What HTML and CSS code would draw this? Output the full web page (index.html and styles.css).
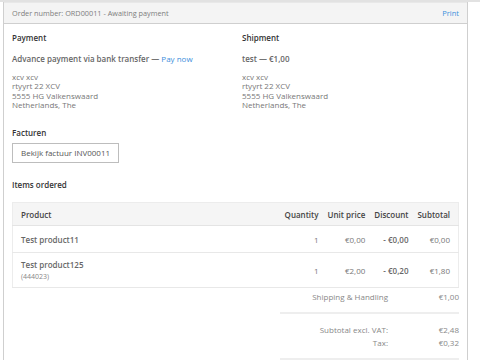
FILE: index.html
```html
<!DOCTYPE html>
<html>
<head>
<meta charset="utf-8">
<link rel="stylesheet" href="styles.css">
</head>
<body>
<div class="topstrip"></div>
<div class="panel">
  <div class="panel-head">
    <span class="order-title">Order number: ORD00011 - Awaiting payment</span>
    <a class="link print">Print</a>
  </div>
  <div class="panel-body">
    <div class="cols">
      <div class="col">
        <h3 class="heading">Payment</h3>
        <p class="method">Advance payment via bank transfer — <a class="link pay">Pay now</a></p>
        <p class="address">xcv xcv<br>rtyyrt 22 XCV<br>5555 HG Valkenswaard<br>Netherlands, The</p>
      </div>
      <div class="col">
        <h3 class="heading">Shipment</h3>
        <p class="method">test — €1,00</p>
        <p class="address">xcv xcv<br>rtyyrt 22 XCV<br>5555 HG Valkenswaard<br>Netherlands, The</p>
      </div>
    </div>
    <h3 class="heading invoices">Facturen</h3>
    <a class="btn">Bekijk factuur INV00011</a>
    <h3 class="heading items">Items ordered</h3>
    <table class="items-table">
      <thead>
        <tr>
          <th class="prod">Product</th>
          <th>Quantity</th>
          <th>Unit price</th>
          <th>Discount</th>
          <th>Subtotal</th>
        </tr>
      </thead>
      <tbody>
        <tr class="row1">
          <td class="prod"><span class="pname">Test product11</span></td>
          <td>1</td>
          <td>€0,00</td>
          <td class="disc">- €0,00</td>
          <td>€0,00</td>
        </tr>
        <tr class="row2">
          <td class="prod"><span class="pname">Test product125</span><br><span class="sku">(444023)</span></td>
          <td>1</td>
          <td>€2,00</td>
          <td class="disc">- €0,20</td>
          <td>€1,80</td>
        </tr>
      </tbody>
    </table>
    <div class="totals">
      <div class="trow ship"><span class="tl">Shipping &amp; Handling</span><span class="tv">€1,00</span></div>
      <div class="tgroup">
        <div class="trow"><span class="tl">Subtotal excl. VAT:</span><span class="tv">€2,48</span></div>
        <div class="trow"><span class="tl">Tax:</span><span class="tv">€0,32</span></div>
      </div>
    </div>
  </div>
</div>
</body>
</html>
```
FILE: styles.css
```css
html, body {
  margin: 0;
  padding: 0;
  background: #fff;
}
body {
  font-family: "Open Sans", "Liberation Sans", sans-serif;
  color: #666;
  font-size: 8px;
  overflow: hidden;
  height: 360px;
}
.topstrip {
  height: 2px;
  background: #e2e2e2;
}
.panel {
  margin-left: 3px;
  width: 463px;
  border-left: 1px solid #cfcfcf;
  border-right: 1px solid #cfcfcf;
  min-height: 358px;
}
.panel-head {
  height: 20px;
  background: #f4f4f4;
  border-top: 1px solid #e8e8e8;
  border-bottom: 1px solid #cfcfcf;
  display: flex;
  align-items: center;
  justify-content: space-between;
  padding: 0 8px 0 8px;
}
.order-title {
  font-size: 7.3px;
  font-weight: 400;
  color: #7d7d7d;
}
.link {
  color: #3d8fdc;
  text-decoration: none;
}
.print {
  font-size: 7.5px;
}
.panel-body {
  padding: 0 8px;
}
.cols {
  display: flex;
}
.col {
  flex: none;
  width: 230px;
}
.heading {
  margin: 0;
  font-size: 8px;
  font-weight: 600;
  color: #333;
  line-height: 12px;
}
.cols .heading {
  margin-top: 8px;
}
.method {
  margin: 9px 0 0 0;
  font-size: 8px;
  font-weight: 600;
  color: #666;
  line-height: 12px;
}
.method .pay {
  font-weight: 400;
  font-size: 8px;
}
.address {
  margin: 7px 0 0 0;
  font-size: 8px;
  line-height: 9.3px;
  color: #777;
}
.invoices {
  margin-top: 18px;
}
.btn {
  display: inline-block;
  margin-top: 4px;
  height: 18px;
  line-height: 18px;
  padding: 0 8px;
  border: 1px solid #bdbdbd;
  color: #555;
  font-size: 8px;
}
.items {
  margin-top: 16px;
}
.items-table {
  margin-top: 11px;
  width: 447px;
  border-collapse: collapse;
  border: 1px solid #ececec;
  font-size: 8px;
  color: #777;
}
.items-table th {
  background: #f5f5f5;
  font-weight: 600;
  color: #444;
  height: 22px;
  padding: 0 4.5px;
  text-align: right;
  white-space: nowrap;
  border-bottom: 1px solid #e4e4e4;
}
.items-table td {
  padding: 0 4.5px;
  text-align: right;
  white-space: nowrap;
  border-bottom: 1px solid #e8e8e8;
}
.items-table .prod {
  text-align: left;
  width: 100%;
  padding-left: 8px;
}
.items-table th:last-child,
.items-table td:last-child {
  padding-right: 8px;
}
.row1 td {
  height: 26px;
}
.row2 td {
  height: 34px;
}
.pname {
  font-weight: 600;
  color: #666;
  line-height: 10px;
}
.sku {
  font-size: 7px;
  color: #888;
  line-height: 9px;
}
.disc {
  font-weight: 600;
  color: #666;
}
.totals {
  margin-left: 268px;
  width: 179px;
  font-size: 8px;
  color: #888;
}
.trow {
  display: flex;
  justify-content: flex-end;
  line-height: 13px;
}
.tl {
  text-align: right;
}
.tv {
  width: 71px;
  text-align: right;
}
.ship {
  padding-top: 1.5px;
  padding-bottom: 9.5px;
  border-bottom: 2px solid #eeeeee;
}
.tgroup {
  padding-top: 8.5px;
  padding-bottom: 9.5px;
  border-bottom: 2px solid #eeeeee;
}
```
